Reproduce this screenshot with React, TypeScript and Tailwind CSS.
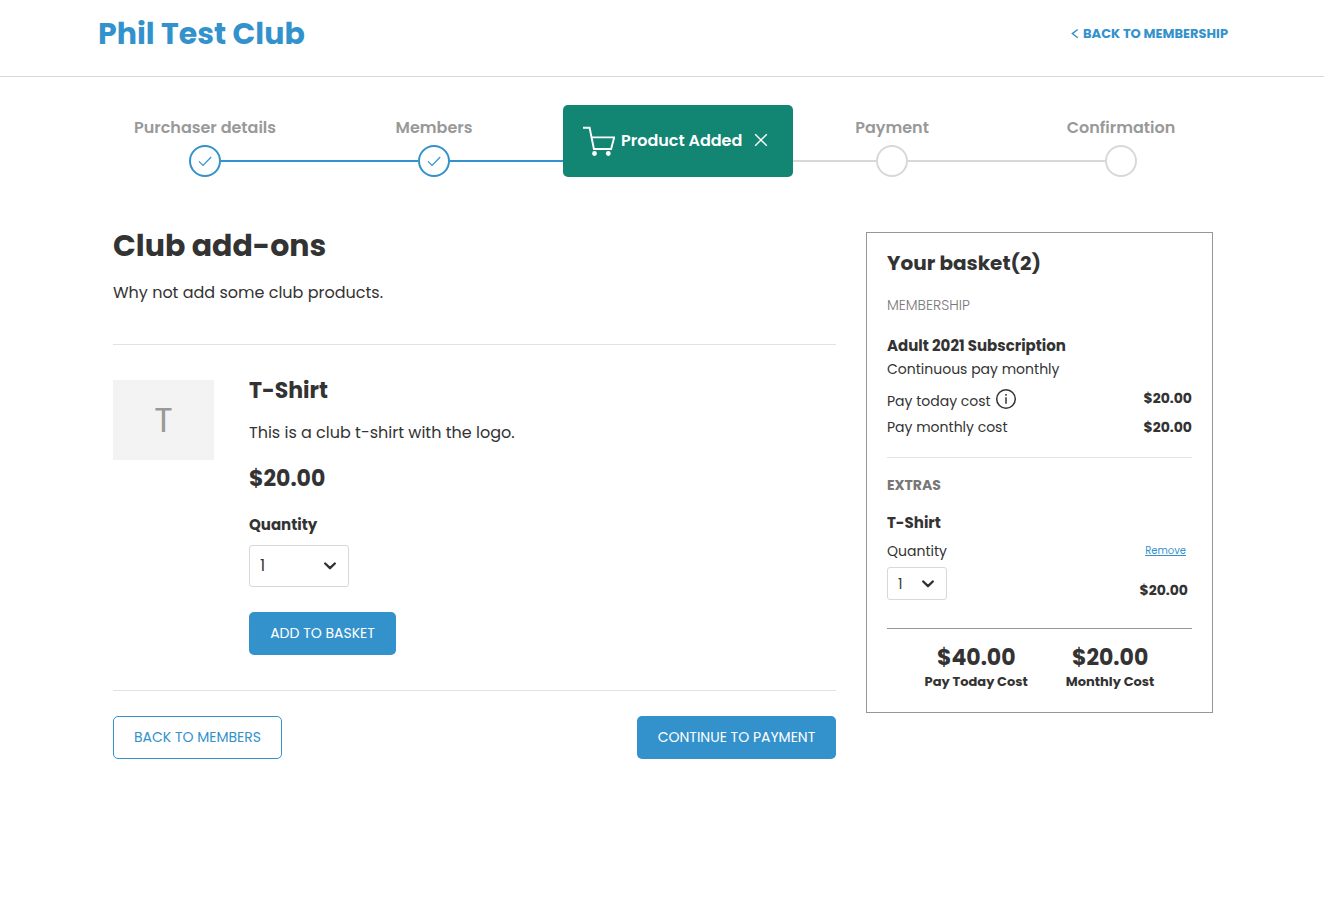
import { useState } from 'react';

const steps = [
  { label: 'Purchaser details', done: true },
  { label: 'Members', done: true },
  { label: '', done: false },
  { label: 'Payment', done: false },
  { label: 'Confirmation', done: false },
];

function Chevron() {
  return (
    <svg className="w-3 h-2" viewBox="0 0 12 8" fill="none" stroke="#333" strokeWidth="2.4" strokeLinecap="round" strokeLinejoin="round">
      <path d="M1.2 1.5 6 6.2l4.8-4.7" />
    </svg>
  );
}

function StepLine({ visible, active }: { visible: boolean; active: boolean }) {
  if (!visible) return <div className="flex-1" />;
  return <div className={`flex-1 h-0.5 ${active ? 'bg-[#3392cc]' : 'bg-[#d8d8d8]'}`} />;
}

export default function App() {
  const [quantity, setQuantity] = useState('1');
  const [basketQuantity, setBasketQuantity] = useState('1');
  const [showToast, setShowToast] = useState(true);

  return (
    <div className="relative min-h-screen bg-white text-[#333] font-[Poppins,Inter,sans-serif]">
      {/* Header */}
      <header className="border-b border-[#d8d8d8] pl-0.5">
        <div className="max-w-[1130px] mx-auto h-[76px] pb-2 flex items-center justify-between">
          <h1 className="text-3xl leading-10 font-bold text-[#3392cc]">Phil Test Club</h1>
          <a href="#membership" className="flex items-center gap-1 text-[13px] leading-5 font-bold text-[#3392cc]">
            <svg className="w-2 h-3" viewBox="0 0 8 12" fill="none" stroke="currentColor" strokeWidth="1.4">
              <path d="M6.8 1.5 1.3 5.6 6.8 9.8" />
            </svg>
            BACK TO MEMBERSHIP
          </a>
        </div>
      </header>

      {/* Toast */}
      {showToast && (
        <div role="status" className="absolute z-10 top-[105px] left-1/2 -translate-x-1/2 ml-4 w-[230px] h-[72px] px-5 flex items-center bg-[#138573] text-white rounded-[5px]">
          <svg className="w-8 h-8 shrink-0" viewBox="0 0 32 32" fill="none" stroke="currentColor" strokeWidth="1.9">
            <path d="M0 2.8h6.6l4.3 21.2h17.2l3.1-11.6H8.6" />
            <circle cx="11.5" cy="28.5" r="2.4" fill="currentColor" stroke="none" />
            <circle cx="25.3" cy="28.5" r="2.4" fill="currentColor" stroke="none" />
          </svg>
          <span className="ml-1.5 text-base font-semibold whitespace-nowrap">Product Added</span>
          <button aria-label="Close" className="ml-auto mr-[5px] mb-0.5" onClick={() => setShowToast(false)}>
            <svg className="block w-3.5 h-3.5" viewBox="0 0 14 14" fill="none" stroke="currentColor" strokeWidth="1.4">
              <path d="M1.2 1.2l11.6 11.6M12.8 1.2 1.2 12.8" />
            </svg>
          </button>
        </div>
      )}

      {/* Progress */}
      <ol className="max-w-[1147px] mx-auto pl-0.5 pt-[39px] flex">
        {steps.map((step, i) => (
          <li key={i} className="flex-1">
            <p className="h-[29px] text-base leading-6 font-semibold text-center text-[#999]">{step.label}</p>
            <div className="flex items-center">
              <StepLine visible={i > 0} active={i < 3} />
              <div
                className={`w-8 h-8 rounded-full border-2 flex items-center justify-center ${
                  step.done ? 'border-[#3392cc]' : 'border-[#d8d8d8]'
                }`}
              >
                {step.done && (
                  <svg className="w-3.5 h-3" viewBox="0 0 14 12" fill="none" stroke="#3392cc" strokeWidth="1.2">
                    <path d="M1 6.3l4 4L13.2 2" />
                  </svg>
                )}
              </div>
              <StepLine visible={i < steps.length - 1} active={i < 2} />
            </div>
          </li>
        ))}
      </ol>

      <main className="max-w-[1102px] mx-auto pl-0.5 pt-[49px] flex items-start gap-[30px]">
        {/* Products */}
        <section className="flex-1">
          <h2 className="text-3xl leading-10 font-bold">Club add-ons</h2>
          <p className="mt-[15px] text-base leading-6">Why not add some club products.</p>

          <div className="mt-[39px] py-[35px] border-y border-[#e2e2e2] flex items-start gap-[35px]">
            <div className="w-[101px] h-20 bg-[#f3f3f3] flex items-center justify-center text-[34px] text-[#999]">T</div>
            <div>
              <h3 className="text-[22px] leading-[22px] font-bold">T-Shirt</h3>
              <p className="mt-[19px] text-base leading-6">This is a club t-shirt with the logo.</p>
              <p className="mt-5 text-[22px] leading-7 font-bold">$20.00</p>
              <label htmlFor="quantity" className="mt-5 block text-[15px] leading-6 font-bold">Quantity</label>
              <div className="relative mt-2 w-[100px]">
                <select
                  id="quantity"
                  value={quantity}
                  onChange={(e) => setQuantity(e.target.value)}
                  className="appearance-none block w-full h-[42px] pl-2.5 border border-[#d8d8d8] rounded-[3px] bg-white text-base outline-none"
                >
                  <option>1</option>
                  <option>2</option>
                  <option>3</option>
                </select>
                <span className="absolute inset-y-0 right-[13px] flex items-center pointer-events-none"><Chevron /></span>
              </div>
              <button className="mt-[25px] h-[43px] w-[147px] pb-0.5 bg-[#3392cc] text-white text-sm rounded-[5px]">ADD TO BASKET</button>
            </div>
          </div>

          <div className="mt-[25px] flex justify-between">
            <button className="h-[43px] w-[169px] pb-0.5 border border-[#3392cc] text-[#3392cc] text-sm rounded-[5px]">BACK TO MEMBERS</button>
            <button className="h-[43px] w-[199px] pb-0.5 bg-[#3392cc] text-white text-sm rounded-[5px]">CONTINUE TO PAYMENT</button>
          </div>
        </section>

        {/* Basket */}
        <aside className="w-[347px] shrink-0 mt-1.5 px-5 pt-4 pb-5 border border-[#979797] text-sm">
          <h2 className="text-xl leading-7 font-bold">Your basket(2)</h2>
          <p className="mt-[18px] leading-5 font-light text-[#777]">MEMBERSHIP</p>

          <h3 className="mt-[21px] text-[15px] leading-5 font-bold">Adult 2021 Subscription</h3>
          <p className="mt-[3px] leading-5">Continuous pay monthly</p>
          <div className="mt-2 h-6 flex items-start justify-between">
            <span className="flex items-start gap-1 leading-7">
              Pay today cost
              <svg className="w-[22px] h-[22px] mt-px" viewBox="0 0 22 22" fill="none" stroke="#333" strokeWidth="1.5">
                <circle cx="11" cy="11" r="9.3" />
                <path d="M11 9.3v6.5" />
                <path d="M11 6v1.7" />
              </svg>
            </span>
            <span className="leading-[22px] font-bold">$20.00</span>
          </div>
          <div className="mt-1.5 pb-5 flex justify-between border-b border-[#e2e2e2] leading-5">
            <span>Pay monthly cost</span>
            <span className="font-bold">$20.00</span>
          </div>

          <p className="mt-[17px] leading-5 font-bold text-[#777]">EXTRAS</p>
          <h3 className="mt-[18px] text-[15px] leading-5 font-bold">T-Shirt</h3>
          <div className="mt-1.5 pb-7 flex justify-between border-b border-[#979797]">
            <div>
              <label htmlFor="basket-quantity" className="block leading-6">Quantity</label>
              <div className="relative mt-1 w-[60px]">
                <select
                  id="basket-quantity"
                  value={basketQuantity}
                  onChange={(e) => setBasketQuantity(e.target.value)}
                  className="appearance-none block w-full h-[33px] pl-2.5 border border-[#d8d8d8] rounded-[3px] bg-white text-sm outline-none"
                >
                  <option>1</option>
                  <option>2</option>
                  <option>3</option>
                </select>
                <span className="absolute inset-y-0 right-[13px] flex items-center pointer-events-none"><Chevron /></span>
              </div>
            </div>
            <div className="pr-1 flex flex-col items-end justify-between">
              <a href="#remove" className="mr-0.5 text-[10px] leading-6 text-[#3392cc] underline">Remove</a>
              <span className="leading-5 font-bold">$20.00</span>
            </div>
          </div>

          <div className="pt-[15px] flex justify-center gap-[38px] text-center font-bold">
            <div>
              <p className="text-[22px] leading-7">$40.00</p>
              <p className="text-[13px] leading-5">Pay Today Cost</p>
            </div>
            <div>
              <p className="text-[22px] leading-7">$20.00</p>
              <p className="text-[13px] leading-5">Monthly Cost</p>
            </div>
          </div>
        </aside>
      </main>
    </div>
  );
}
